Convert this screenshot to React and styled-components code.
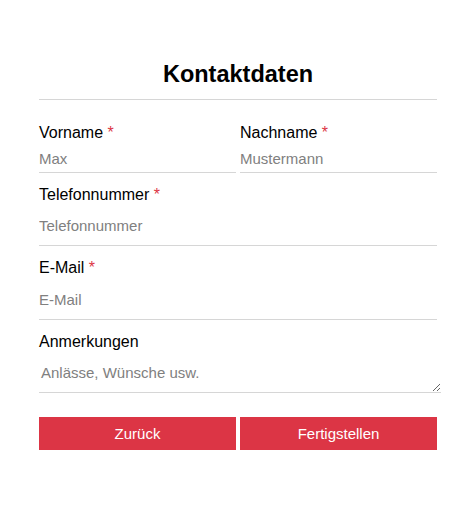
import React from "react";
import styled, { createGlobalStyle } from "styled-components";

const GlobalStyle = createGlobalStyle`
  body {
    margin: 0;
    background: #fff;
    font-family: "Liberation Sans", Arial, sans-serif;
    color: #000;
  }
  * {
    font-family: inherit;
  }
`;

function ContactForm() {
  return (
    <Container>
      <Title>Kontaktdaten</Title>
      <Form onSubmit={(e) => e.preventDefault()}>
        <Row>
          <Field>
            <Label>
              Vorname <Required>*</Required>
            </Label>
            <Input placeholder="Max" $compact />
          </Field>
          <Field>
            <Label>
              Nachname <Required>*</Required>
            </Label>
            <Input placeholder="Mustermann" $compact />
          </Field>
        </Row>
        <Field>
          <Label>
            Telefonnummer <Required>*</Required>
          </Label>
          <Input placeholder="Telefonnummer" />
        </Field>
        <Field>
          <Label>
            E-Mail <Required>*</Required>
          </Label>
          <Input placeholder="E-Mail" />
        </Field>
        <Field>
          <Label>Anmerkungen</Label>
          <TextArea rows={1} placeholder="Anlässe, Wünsche usw." />
        </Field>
        <Buttons>
          <Button type="button">Zurück</Button>
          <Button type="submit">Fertigstellen</Button>
        </Buttons>
      </Form>
    </Container>
  );
}

export default function App() {
  return (
    <>
      <GlobalStyle />
      <ContactForm />
    </>
  );
}

const Container = styled.div`
  width: 398px;
  padding: 61px 0 0 39px;
`;

const Title = styled.h2`
  margin: 0;
  padding-bottom: 11px;
  border-bottom: 1px solid #d6d6d6;
  font-size: 23.5px;
  line-height: 27px;
  font-weight: 700;
  text-align: center;
`;

const Form = styled.form`
  display: flex;
  flex-direction: column;
  gap: 13px;
  margin-top: 24px;
`;

const Row = styled.div`
  display: grid;
  grid-template-columns: 1fr 1fr;
  gap: 4px;
`;

const Field = styled.div`
  display: flex;
  flex-direction: column;
  gap: 2px;
`;

const Label = styled.label`
  font-size: 16px;
  line-height: 18.5px;
`;

const Required = styled.span`
  color: #dc3545;
`;

const Input = styled.input`
  box-sizing: border-box;
  width: 100%;
  margin: 0;
  padding: ${(p) => (p.$compact ? "5px 0" : "11px 0")};
  border: none;
  border-bottom: 1px solid #d6d6d6;
  outline: none;
  font-size: 15px;
  line-height: 17px;
  color: #000;
  background: transparent;

  &::placeholder {
    color: #808080;
  }
`;

const TextArea = styled.textarea`
  display: block;
  width: 100%;
  height: 17px;
  margin: 0;
  padding: 11px 2px;
  border: none;
  border-bottom: 1px solid #d6d6d6;
  outline: none;
  font-size: 15px;
  line-height: 17px;
  background: transparent;
  overflow: hidden;

  &::placeholder {
    color: #808080;
  }
`;

const Buttons = styled.div`
  display: grid;
  grid-template-columns: 1fr 1fr;
  gap: 4px;
  margin-top: 11px;
`;

const Button = styled.button`
  height: 33px;
  margin: 0;
  padding: 0;
  border: none;
  border-radius: 0;
  background: #dc3545;
  color: #fff;
  font-size: 15px;
  cursor: pointer;
`;
